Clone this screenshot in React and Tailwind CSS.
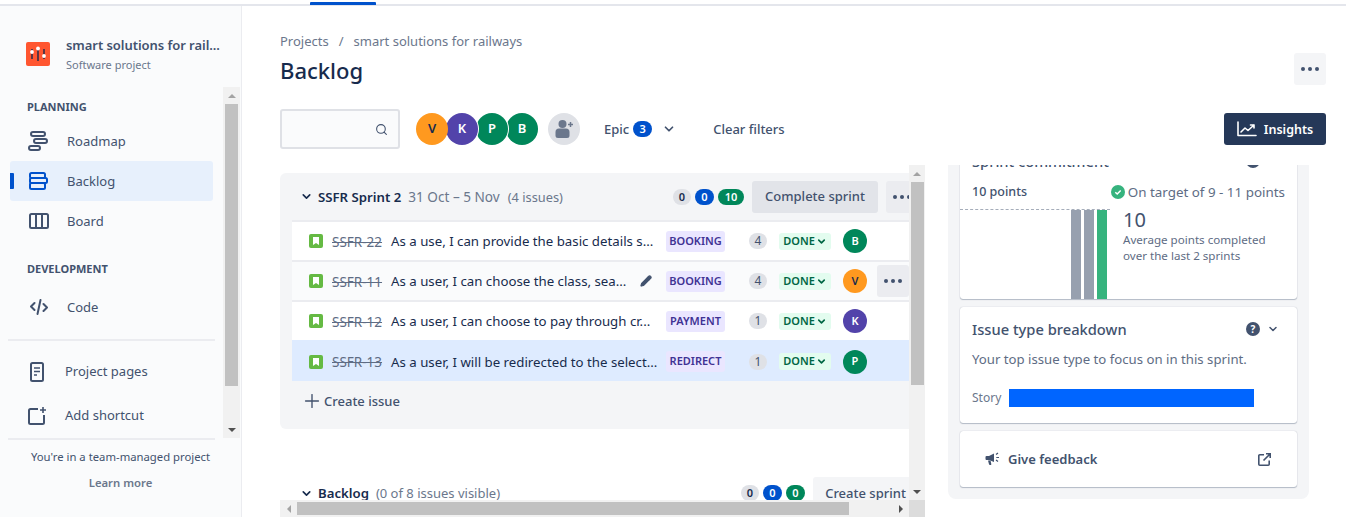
import React from 'react';
import { ChevronDown, Search, Plus, Pencil } from 'lucide-react';

const ArrowUp = () => <div className="w-0 h-0 border-x-[4px] border-x-transparent border-b-[4px] border-b-[#a3a3a3]" />;
const ArrowDown = () => <div className="w-0 h-0 border-x-[4px] border-x-transparent border-t-[4px] border-t-[#505050]" />;

const Dots = ({ className }) => (
  <div className={`flex gap-[3px] ${className}`}>
    <span className="w-[4px] h-[4px] rounded-full bg-[#42526e]" />
    <span className="w-[4px] h-[4px] rounded-full bg-[#42526e]" />
    <span className="w-[4px] h-[4px] rounded-full bg-[#42526e]" />
  </div>
);

const Logo = () => (
  <svg width="24" height="24" viewBox="0 0 24 24" className="shrink-0">
    <rect width="24" height="24" rx="2" fill="#ff5630" />
    <g stroke="#172b4d" strokeWidth="1.4">
      <path d="M6 7v10M12 5v14M18 7v10" />
    </g>
    <circle cx="6" cy="10" r="1.9" fill="#fff" />
    <circle cx="12" cy="6.500" r="1.9" fill="#fff" />
    <circle cx="18" cy="14" r="1.9" fill="#fff" />
  </svg>
);

const RoadmapIcon = () => (
  <svg width="20" height="22" viewBox="0 0 20 22" fill="none" stroke="#42526e" strokeWidth="2">
    <rect x="3" y="2" width="14" height="4" rx="2" />
    <rect x="6" y="9" width="13" height="4" rx="2" />
    <rect x="1" y="16" width="11" height="4" rx="2" />
  </svg>
);

const BacklogIcon = () => (
  <svg width="20" height="20" viewBox="0 0 20 20" fill="none" stroke="#0052cc" strokeWidth="2">
    <rect x="2" y="2" width="15" height="5" rx="1.5" />
    <rect x="2" y="7" width="17" height="5" rx="1.5" />
    <rect x="2" y="12" width="15" height="6" rx="1.5" />
  </svg>
);

const BoardIcon = () => (
  <svg width="20" height="18" viewBox="0 0 20 18" fill="none" stroke="#42526e" strokeWidth="2">
    <rect x="1" y="2" width="18" height="14" rx="1.5" />
    <path d="M7 2v14M13 2v14" />
  </svg>
);

const CodeIcon = () => (
  <svg width="18" height="16" viewBox="0 0 18 16" fill="none" stroke="#42526e" strokeWidth="2" strokeLinecap="round" strokeLinejoin="round">
    <path d="M4.500 4 1 7.500 4.500 11M13.500 5 17 8.500 13.500 12M10.500 1 7.500 15" />
  </svg>
);

const PagesIcon = () => (
  <svg width="14" height="20" viewBox="0 0 14 20" fill="none" stroke="#42526e" strokeWidth="2">
    <rect x="1" y="1" width="12" height="18" rx="1.5" />
    <path d="M4 6h6M4 9.500h6M4 13h3" strokeWidth="1.5" />
  </svg>
);

const ShortcutIcon = () => (
  <svg width="18" height="18" viewBox="0 0 18 18" fill="none" stroke="#42526e" strokeWidth="2">
    <path d="M10 2H2.500A1.500 1.500 0 0 0 1 3.500v12A1.500 1.500 0 0 0 2.500 17h12a1.500 1.500 0 0 0 1.500-1.500V8" />
    <path d="M15 0v6M12 3h6" strokeWidth="1.600" />
  </svg>
);

const StoryIcon = () => (
  <svg width="14" height="14" viewBox="0 0 14 14" className="shrink-0">
    <rect width="14" height="14" rx="2" fill="#65ba43" />
    <path d="M4 3h6v8L7 9l-3 2z" fill="#fff" />
  </svg>
);

const HelpIcon = () => (
  <div className="w-[14px] h-[14px] rounded-full bg-[#42526e] text-white text-[10px] font-bold leading-[14px] text-center">?</div>
);

const InsightsIcon = () => (
  <svg width="20" height="16" viewBox="0 0 20 16" fill="none" stroke="#fff" strokeWidth="1.600" strokeLinecap="round" strokeLinejoin="round">
    <path d="M1 1v13.500h18" />
    <path d="M4 11l4-4 3 2.500 6-5.500M13.500 4H17v3" />
  </svg>
);

const CheckBadge = () => (
  <svg width="14" height="14" viewBox="0 0 14 14" className="shrink-0">
    <circle cx="7" cy="7" r="7" fill="#36b37e" />
    <path d="M4.300 7.200 6.200 9l3.500-3.600" fill="none" stroke="#fff" strokeWidth="1.500" />
  </svg>
);

const AddPersonIcon = () => (
  <svg width="20" height="20" viewBox="0 0 20 20" fill="#6b778c">
    <circle cx="8.500" cy="5" r="4" />
    <path d="M1.500 13a3.500 3.500 0 0 1 3.500-3.500h7a3.500 3.500 0 0 1 3.500 3.500v3.500A2.500 2.500 0 0 1 13 19H4a2.500 2.500 0 0 1-2.500-2.500z" />
    <path d="M16.500 3v5M14 5.500h5" stroke="#6b778c" strokeWidth="1.500" />
  </svg>
);

const MegaphoneIcon = () => (
  <svg width="15" height="14" viewBox="0 0 15 14" fill="#42526e">
    <path d="M9 1.500v8.500L4 8H1.500A1 1 0 0 1 .5 7V5a1 1 0 0 1 1-1H4z" />
    <path d="M3 8.500h2.500l.8 3.500a.8.800 0 0 1-.8 1H5a1 1 0 0 1-1-.8z" />
    <path d="M11 2.500l2-1.500M11.300 5.500H14M11 8l2 1.500" fill="none" stroke="#42526e" strokeWidth="1.200" />
  </svg>
);

const ExternalIcon = () => (
  <svg width="13" height="13" viewBox="0 0 13 13" fill="none" stroke="#42526e" strokeWidth="1.600">
    <path d="M6 1.800H1.800a1 1 0 0 0-1 1v8.400a1 1 0 0 0 1 1h8.400a1 1 0 0 0 1-1V7.500" />
    <path d="M5.500 7.500 12 1M8 .8h4.200V5" />
  </svg>
);

const NavItem = ({ icon, label, active, textGap = 'w-[57px]', pl = 'pl-[18px]' }) => (
  <div className={`relative flex items-center h-10 ml-[10px] w-[203px] rounded-[3px] ${active ? 'bg-[#e7f0fc]' : ''}`}>
    {active && <span className="absolute left-0 top-[12px] w-[4px] h-[16px] bg-[#0052cc] rounded-r-[1px]" />}
    <div className={`flex items-center ${textGap} ${pl} shrink-0`}>{icon}</div>
    <span className="text-[13px] pt-[2px] text-[#42526e]">{label}</span>
  </div>
);

const Sidebar = () => (
  <aside className="w-[242px] shrink-0 bg-[#fafbfc] border-r border-[#ebecf0] flex flex-col">
    <div className="h-[81px] flex items-start pl-[26px] pt-[30px] gap-[16px]">
      <div className="pt-[6px]"><Logo /></div>
      <div className="flex flex-col">
        <span className="text-[13px] tracking-[-0.05px] leading-[18px] font-semibold text-[#42526e]">smart solutions for rail...</span>
        <span className="text-[11px] leading-[22px] text-[#6b778c]">Software project</span>
      </div>
    </div>
    <div className="flex h-[351px]">
      <div className="w-[223px] flex flex-col">
        <div className="pl-[27px] pt-[13px] h-[34px] text-[11px] leading-[14px] font-bold text-[#42526e]">PLANNING</div>
        <NavItem icon={<RoadmapIcon />} label="Roadmap" pl="pl-[18px]" />
        <NavItem icon={<BacklogIcon />} label="Backlog" active />
        <NavItem icon={<BoardIcon />} label="Board" pl="pl-[19px]" />
        <div className="pl-[27px] pt-[21px] h-[48px] text-[11px] leading-[14px] font-bold text-[#42526e]">DEVELOPMENT</div>
        <div className="h-[28px] mt-[4px] flex items-center">
          <NavItem icon={<CodeIcon />} label="Code" pl="pl-[20px]" />
        </div>
        <div className="mx-[8px] mt-[18px] h-[2px] bg-[#ebecf0]" />
        <div className="h-[21px]" />
        <div className="flex items-center h-[20px] pl-[30px]">
          <div className="w-[35px]"><PagesIcon /></div>
          <span className="text-[13px] text-[#42526e]">Project pages</span>
        </div>
        <div className="h-[24px]" />
        <div className="flex items-center h-[20px] pl-[28px]">
          <div className="w-[37px]"><ShortcutIcon /></div>
          <span className="text-[13px] text-[#42526e]">Add shortcut</span>
        </div>
      </div>
      <div className="w-[17px] bg-[#f1f1f1] flex flex-col items-center">
        <div className="h-[17px] flex items-center justify-center"><ArrowUp /></div>
        <div className="w-[13px] h-[282px] bg-[#c1c1c1]" />
        <div className="flex-1" />
        <div className="h-[17px] flex items-center justify-center"><ArrowDown /></div>
      </div>
    </div>
    <div className="mx-[8px] w-[207px] h-[2px] bg-[#ebecf0]" />
    <div className="text-center pt-[9px]">
      <div className="text-[11.300px] leading-[16px] text-[#42526e]">You're in a team-managed project</div>
      <div className="text-[11.300px] leading-[16px] mt-[10px] font-semibold text-[#6b778c]">Learn more</div>
    </div>
  </aside>
);

const avatarColors = { V: 'bg-[#ff991f] text-[#172b4d]', K: 'bg-[#5243aa] text-white', P: 'bg-[#00875a] text-white', B: 'bg-[#00875a] text-white' };

const Avatar = ({ name }) => (
  <div className={`w-6 h-6 rounded-full text-[11px] font-semibold flex items-center justify-center ${avatarColors[name]}`}>{name}</div>
);

const FilterRow = () => (
  <div className="flex items-center h-[40px] mt-[18px] pr-5">
    <div className="w-[120px] h-[40px] bg-[#fafbfc] border-2 border-[#dfe1e6] rounded-[3px] flex items-center justify-end pr-[10px]">
      <Search size={13} strokeWidth={2} className="text-[#42526e]" />
    </div>
    <div className="flex ml-[16px]">
      <div className={`relative z-30 w-[32px] h-[32px] rounded-full text-[13px] font-semibold flex items-center justify-center ${avatarColors.V}`}>V</div>
      <div className={`relative z-20 -ml-[2px] w-[32px] h-[32px] rounded-full ring-1 ring-white text-[13px] font-semibold flex items-center justify-center ${avatarColors.K}`}>K</div>
      <div className={`relative z-10 -ml-[2px] w-[32px] h-[32px] rounded-full ring-1 ring-white text-[13px] font-semibold flex items-center justify-center ${avatarColors.P}`}>P</div>
      <div className={`-ml-[2px] w-[32px] h-[32px] rounded-full text-[13px] font-semibold flex items-center justify-center ${avatarColors.B}`}>B</div>
    </div>
    <div className="w-[32px] h-[32px] ml-[10px] rounded-full bg-[#dfe1e6] flex items-center justify-center">
      <AddPersonIcon />
    </div>
    <span className="ml-[24px] pt-[2px] text-[13px] font-medium text-[#42526e]">Epic</span>
    <span className="ml-[4px] w-[19px] h-[16px] rounded-full bg-[#0052cc] text-white text-[11px] font-semibold leading-[16px] text-center">3</span>
    <ChevronDown size={14} strokeWidth={3} className="ml-[10px] text-[#42526e]" />
    <span className="ml-[37px] pt-[2px] text-[13px] font-medium text-[#42526e]">Clear filters</span>
    <button className="ml-auto w-[102px] h-[32px] bg-[#253858] rounded-[3px] flex items-center justify-center gap-[7px] text-white text-[12.500px] font-semibold">
      <InsightsIcon />
      <span className="pt-[2px]">Insights</span>
    </button>
  </div>
);

const rows = [
  { id: 'SSFR-22', text: 'As a use, I can provide the basic details s...', epic: 'BOOKING', pts: 4, who: 'B' },
  { id: 'SSFR-11', text: 'As a user, I can choose the class, sea...', epic: 'BOOKING', pts: 4, who: 'V', hover: true },
  { id: 'SSFR-12', text: 'As a user, I can choose to pay through cr...', epic: 'PAYMENT', pts: 1, who: 'K' },
  { id: 'SSFR-13', text: 'As a user, I will be redirected to the select...', epic: 'REDIRECT', pts: 1, who: 'P', selected: true },
];

const IssueRow = ({ row }) => (
  <div className={`flex items-center pl-[17px] border-t-2 ${row.selected ? 'h-[41px] bg-[#deebff] border-[#deebff]' : row.hover ? 'h-10 bg-[#fafbfc] border-[#ebecf0]' : 'h-10 bg-white border-[#ebecf0]'}`}>
    <StoryIcon />
    <span className="ml-[9px] pt-[2px] w-[59px] shrink-0 text-[13.500px] text-[#5e6c84] line-through">{row.id}</span>
    <div className="w-[275px] shrink-0 flex items-center">
      <span className="pt-[2px] text-[13.250px] text-[#172b4d] whitespace-nowrap">{row.text}</span>
      {row.hover && <Pencil size={12} strokeWidth={2.5} fill="#42526e" className="ml-auto mr-[14px] text-[#42526e]" />}
    </div>
    <div className="w-[83px] shrink-0">
      <span className="flex justify-center w-[59px] h-[21px] rounded-[3px] bg-[#eae6ff] text-[#403294] text-[11px] font-semibold leading-[20px] whitespace-nowrap">{row.epic}</span>
    </div>
    <div className="w-[30px] shrink-0">
      <span className="block w-[18px] h-[16px] rounded-full bg-[#dfe1e6] text-[12px] leading-[16px] text-center text-[#42526e]">{row.pts}</span>
    </div>
    <div className="w-[64px] shrink-0">
      <span className="flex items-center justify-center gap-[1px] w-[52px] h-[17px] rounded-[3px] bg-[#e3fcef] text-[#006644] text-[11px] font-semibold">
        DONE
        <ChevronDown size={11} strokeWidth={3.5} />
      </span>
    </div>
    <Avatar name={row.who} />
    {row.hover && (
      <div className="ml-[10px] w-[32px] h-[32px] rounded-[3px] bg-[#ebecf0] flex items-center justify-center"><Dots /></div>
    )}
  </div>
);

const Badge = ({ className, children, w }) => (
  <span className={`h-[16px] rounded-full text-[11px] font-semibold leading-[16px] text-center ${w} ${className}`}>{children}</span>
);

const BoardColumn = () => (
  <div className="w-[645px] shrink-0 flex flex-col h-[352px]">
    <div className="flex h-[335px]">
      <div className="w-[629px] overflow-hidden pt-[8px]">
        <div className="w-[650px] h-[256px] bg-[#f4f5f7] rounded-[6px] px-[12px]">
          <div className="flex items-center h-[47px]">
            <ChevronDown size={13} strokeWidth={3} className="ml-[8px] text-[#172b4d]" />
            <span className="ml-[5px] pt-[2px] text-[13.200px] font-semibold text-[#172b4d]">SSFR Sprint 2</span>
            <span className="ml-[7px] pt-[2px] text-[13.600px] text-[#6b778c]">31 Oct – 5 Nov</span>
            <span className="ml-[8px] pt-[2px] text-[12.800px] text-[#6b778c]">(4 issues)</span>
            <Badge className="ml-auto bg-[#dfe1e6] text-[#172b4d]" w="w-[18px]">0</Badge>
            <Badge className="ml-[4px] bg-[#0052cc] text-white" w="w-[19px]">0</Badge>
            <Badge className="ml-[4px] bg-[#00875a] text-white" w="w-[26px]">10</Badge>
            <button className="ml-[8px] pt-[1px] w-[126px] h-[32px] bg-[#e2e4e9] rounded-[3px] text-[13px] font-medium text-[#42526e]">Complete sprint</button>
            <div className="ml-[8px] w-[32px] h-[32px] rounded-[3px] bg-[#ebecf0] flex items-center justify-center"><Dots /></div>
          </div>
          <div className="flex flex-col">
            {rows.map((row) => <IssueRow key={row.id} row={row} />)}
          </div>
          <div className="flex items-center h-[40px] pl-[9px] gap-[1px] text-[13px] font-medium text-[#42526e]">
            <Plus size={22} strokeWidth={1.5} />
            <span className="pt-[2px]">Create issue</span>
          </div>
        </div>
        <div className="w-[650px] flex items-center h-[32px] mt-[48px] px-[12px]">
          <ChevronDown size={13} strokeWidth={3} className="ml-[8px] text-[#172b4d]" />
          <span className="ml-[5px] pt-[2px] text-[13.200px] font-semibold text-[#172b4d]">Backlog</span>
          <span className="ml-[7px] pt-[2px] text-[13px] text-[#6b778c]">(0 of 8 issues visible)</span>
          <Badge className="ml-auto bg-[#dfe1e6] text-[#172b4d]" w="w-[18px]">0</Badge>
          <Badge className="ml-[4px] bg-[#0052cc] text-white" w="w-[19px]">0</Badge>
          <Badge className="ml-[4px] bg-[#00875a] text-white" w="w-[19px]">0</Badge>
          <button className="ml-[8px] pt-[1px] w-[105px] h-[32px] bg-[#f4f5f7] rounded-[3px] text-[13px] font-medium text-[#42526e]">Create sprint</button>
        </div>
      </div>
      <div className="w-[16px] bg-[#f1f1f1] flex flex-col items-center">
        <div className="h-[17px] flex items-center justify-center"><ArrowUp /></div>
        <div className="w-[13px] h-[203px] bg-[#c1c1c1]" />
        <div className="flex-1" />
        <div className="h-[17px] flex items-center justify-center"><ArrowDown /></div>
      </div>
    </div>
    <div className="flex h-[17px]">
      <div className="w-[629px] bg-[#f1f1f1] flex items-center">
        <div className="w-[17px] flex justify-center"><div className="w-0 h-0 border-y-[4px] border-y-transparent border-r-[4px] border-r-[#a3a3a3]" /></div>
        <div className="w-[552px] h-[13px] bg-[#c1c1c1]" />
        <div className="flex-1 flex justify-end pr-[6px]"><div className="w-0 h-0 border-y-[4px] border-y-transparent border-l-[4px] border-l-[#505050]" /></div>
      </div>
      <div className="w-[16px] bg-[#dcdcdc]" />
    </div>
  </div>
);

const cardClass = 'bg-white rounded-[3px] shadow-[0_1px_1px_rgba(9,30,66,0.25),0_0_1px_rgba(9,30,66,0.31)]';

const CardHeader = ({ title }) => (
  <div className="flex items-center h-[24px] pl-[12px]">
    <span className="text-[14.700px] font-medium text-[#42526e]">{title}</span>
    <div className="ml-auto flex items-center gap-[7px] pr-[18px]">
      <HelpIcon />
      <ChevronDown size={12} strokeWidth={3} className="text-[#42526e]" />
    </div>
  </div>
);

const InsightsPanel = () => (
  <div className="ml-[23px] w-[361px] h-[334px] bg-[#f4f5f7] rounded-b-[8px] overflow-hidden px-[12px] flex flex-col gap-[8px]">
    <div className={`${cardClass} h-[150px] -mt-[16px] shrink-0`}>
      <CardHeader title="Sprint commitment" />
      <div className="flex items-center justify-between h-[20px] mt-[9px] px-[12px]">
        <span className="text-[12.500px] font-medium text-[#42526e]">10 points</span>
        <span className="flex items-center gap-[3px] text-[13.400px] text-[#5e6c84]"><CheckBadge />On target of 9 - 11 points</span>
      </div>
      <div className="flex mt-[7px]">
        <div className="w-[150px] h-[90px] border-t border-dashed border-[#a5adba] flex justify-end gap-[3px] pr-[3px]">
          <div className="w-[10px] bg-[#97a0af]" />
          <div className="w-[10px] bg-[#97a0af]" />
          <div className="w-[10px] bg-[#36b37e]" />
        </div>
        <div className="ml-[13px]">
          <div className="text-[20px] leading-[22px] text-[#42526e]">10</div>
          <div className="mt-[1px] text-[11.600px] leading-[16px] text-[#5e6c84]">Average points completed<br />over the last 2 sprints</div>
        </div>
      </div>
    </div>
    <div className={`${cardClass} h-[116px] shrink-0 pt-[10px]`}>
      <CardHeader title="Issue type breakdown" />
      <div className="pl-[12px] mt-[8px] text-[13.200px] leading-[20px] text-[#5e6c84]">Your top issue type to focus on in this sprint.</div>
      <div className="flex items-center pl-[12px] mt-[20px]">
        <span className="w-[37px] text-[12px] text-[#6b778c]">Story</span>
        <div className="w-[245px] h-[18px] bg-[#0065ff]" />
      </div>
    </div>
    <div className={`${cardClass} h-[56px] shrink-0 flex items-center pl-[25px] pr-[26px]`}>
      <MegaphoneIcon />
      <span className="ml-[8px] pt-[2px] text-[13px] font-semibold text-[#42526e]">Give feedback</span>
      <div className="ml-auto"><ExternalIcon /></div>
    </div>
  </div>
);

const App = () => (
  <div className="w-[1346px] h-[517px] overflow-hidden bg-white flex flex-col font-['Noto_Sans',sans-serif]">
    {/* Barra superior */}
    <div className="h-[6px] shrink-0 border-b-2 border-[#e4e6ec] pl-[310px] bg-white">
      <div className="w-[66px] h-[3px] mt-[2px] bg-[#0052cc] rounded-t-[1px]" />
    </div>
    <div className="flex flex-1 min-h-0">
      <Sidebar />
      <main className="flex-1 pl-[38px] flex flex-col min-w-0">
        <div className="pt-[27px] h-[47px] text-[13px] leading-[16px] text-[#6b778c]">
          Projects<span className="mx-[10px]">/</span>smart solutions for railways
        </div>
        <div className="flex items-start h-[38px] pr-5">
          <h1 className="text-[22px] leading-[34px] font-medium text-[#172b4d]">Backlog</h1>
          <div className="ml-auto w-[32px] h-[32px] rounded-[3px] bg-[#f4f5f7] flex items-center justify-center"><Dots /></div>
        </div>
        <FilterRow />
        <div className="flex mt-[16px]">
          <BoardColumn />
          <InsightsPanel />
        </div>
      </main>
    </div>
  </div>
);

export default App;
